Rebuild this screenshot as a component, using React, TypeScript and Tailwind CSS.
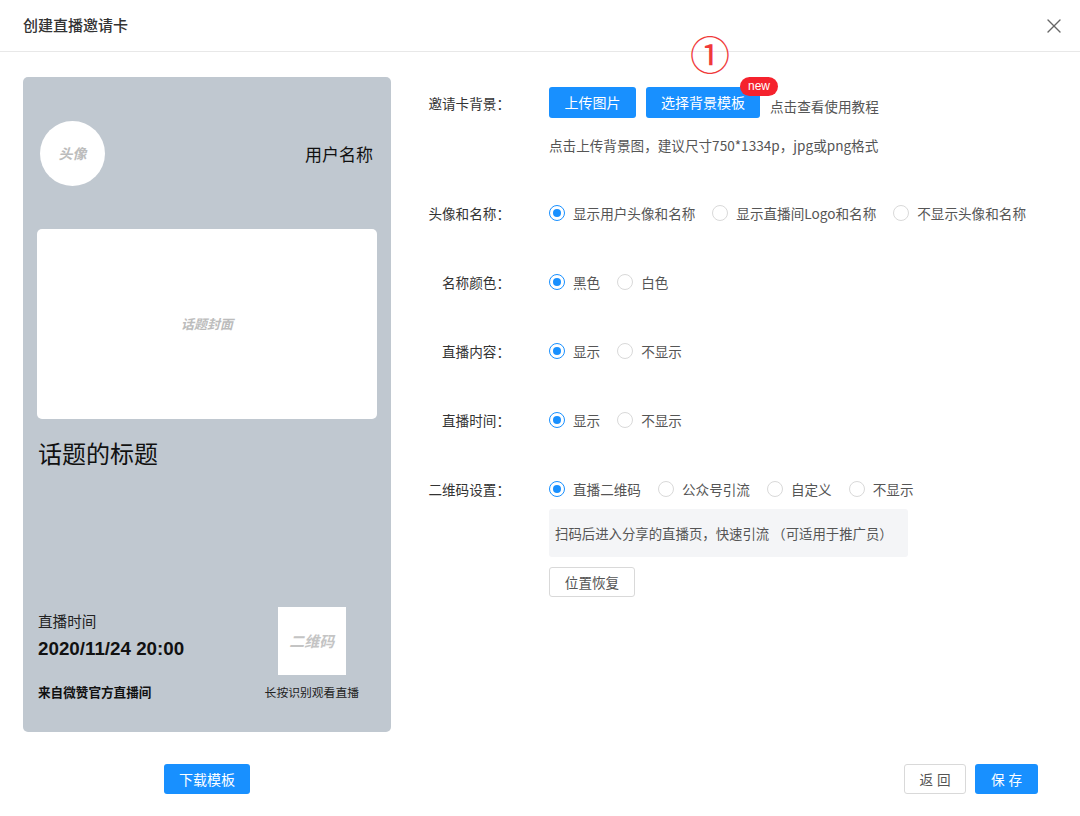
import React from "react";

const FONT = { fontFamily: '"Noto Sans CJK SC", "Liberation Sans", sans-serif' };

function Radio({ checked, label }: { checked?: boolean; label: string }) {
  return (
    <div className="flex items-center">
      <span
        className={
          checked
            ? "w-[16px] h-[16px] rounded-full border border-[#1890ff] flex items-center justify-center bg-white"
            : "w-[16px] h-[16px] rounded-full border border-[#d9d9d9] bg-white"
        }
      >
        {checked && <span className="w-[8px] h-[8px] rounded-full bg-[#1890ff]" />}
      </span>
      <span className="ml-[8px] text-[13.6px] text-[#555] leading-[20px]">{label}</span>
    </div>
  );
}

function Row({ label, children, className }: { label: string; children: React.ReactNode; className?: string }) {
  return (
    <div className={"flex items-center " + (className ?? "")}>
      <div className="w-[90px] text-right text-[13.6px] text-[#333] leading-[20px]">{label}</div>
      <div className="ml-[39px] flex items-center gap-[17px]">{children}</div>
    </div>
  );
}

export default function App() {
  return (
    <div className="w-[1080px] h-[816px] bg-white relative overflow-hidden" style={FONT}>
      {/* header */}
      <div className="h-[52px] border-b border-[#e8e8e8] flex items-center justify-between pl-[23px] pr-[14px]">
        <span className="text-[15px] font-medium text-[#333]">创建直播邀请卡</span>
        <svg width="24" height="24" viewBox="0 0 24 24" fill="none" stroke="#666" strokeWidth="1.4" strokeLinecap="round">
          <path d="M18 6 6 18" />
          <path d="m6 6 12 12" />
        </svg>
      </div>

      {/* body */}
      <div className="flex pt-[25px]">
        {/* card */}
        <div className="ml-[23px] w-[368px] h-[655px] rounded-[5px] bg-[#c0c8d0] flex flex-col px-[14px]">
          <div className="flex items-center justify-between mt-[44px] pl-[3px] pr-[4px]">
            <div className="w-[65px] h-[65px] rounded-full bg-white flex items-center justify-center">
              <span className="text-[14px] font-bold italic text-[#bcbcbc]">头像</span>
            </div>
            <span className="text-[17px] text-[#111]">用户名称</span>
          </div>
          <div className="mt-[43px] h-[190px] rounded-[5px] bg-white flex items-center justify-center">
            <span className="text-[13px] font-bold italic text-[#bcbcbc]">话题封面</span>
          </div>
          <div className="mt-[18px] pl-[1px] text-[24px] leading-[32px] text-[#111]">话题的标题</div>
          <div className="flex-1" />
          <div className="flex justify-between items-end pb-[31px] pl-[1px]">
            <div className="flex flex-col">
              <span className="text-[14.6px] leading-[20px] text-[#222]">直播时间</span>
              <span
                className="mt-[6px] text-[18.8px] leading-[24px] font-semibold text-[#111]"
                style={{ fontFamily: '"Liberation Sans", "Noto Sans CJK SC", sans-serif' }}
              >
                2020/11/24 20:00
              </span>
              <span className="mt-[22px] text-[12.6px] leading-[18px] font-semibold text-[#111]">来自微赞官方直播间</span>
            </div>
            <div className="flex flex-col items-center mr-[18px]">
              <div className="w-[68px] h-[68px] bg-white flex items-center justify-center">
                <span className="text-[15px] font-bold italic text-[#c4c4c4]">二维码</span>
              </div>
              <span className="mt-[8px] text-[11.8px] leading-[18px] text-[#222]">长按识别观看直播</span>
            </div>
          </div>
        </div>

        {/* settings */}
        <div className="ml-[29px] flex flex-col pt-[10px]">
          <Row label="邀请卡背景：">
            <div className="flex items-center">
              <button className="w-[87px] h-[31px] rounded-[3px] bg-[#1890ff] text-white text-[14px]">上传图片</button>
              <div className="relative ml-[10px]">
                <button className="w-[114px] h-[31px] rounded-[3px] bg-[#1890ff] text-white text-[14px]">选择背景模板</button>
                <span className="absolute right-[-18px] top-[-10px] h-[19px] w-[38px] rounded-full bg-[#f5222d] text-white text-[12px] leading-[19px] text-center" style={{ fontFamily: '"Liberation Sans", sans-serif' }}>
                  new
                </span>
              </div>
              <span className="ml-[10px] mt-[8px] text-[13.6px] text-[#555]">点击查看使用教程</span>
            </div>
          </Row>
          <div className="ml-[129px] mt-[17px] text-[13.6px] leading-[20px] text-[#555]">点击上传背景图，建议尺寸750*1334p，jpg或png格式</div>

          <Row label="头像和名称：" className="mt-[48px]">
            <Radio checked label="显示用户头像和名称" />
            <Radio label="显示直播间Logo和名称" />
            <Radio label="不显示头像和名称" />
          </Row>
          <Row label="名称颜色：" className="mt-[49px]">
            <Radio checked label="黑色" />
            <Radio label="白色" />
          </Row>
          <Row label="直播内容：" className="mt-[49px]">
            <Radio checked label="显示" />
            <Radio label="不显示" />
          </Row>
          <Row label="直播时间：" className="mt-[49px]">
            <Radio checked label="显示" />
            <Radio label="不显示" />
          </Row>
          <Row label="二维码设置：" className="mt-[49px]">
            <Radio checked label="直播二维码" />
            <Radio label="公众号引流" />
            <Radio label="自定义" />
            <Radio label="不显示" />
          </Row>
          <div className="ml-[129px] mt-[10px] w-[359px] h-[48px] rounded-[3px] bg-[#f4f5f7] flex items-center px-[6px] text-[13.4px] text-[#555]">
            扫码后进入分享的直播页，快速引流 （可适用于推广员）
          </div>
          <div className="ml-[129px] mt-[10px]">
            <button className="w-[86px] h-[30px] rounded-[3px] border border-[#d9d9d9] bg-white text-[13.6px] text-[#555]">位置恢复</button>
          </div>
        </div>
      </div>

      {/* footer */}
      <div className="flex items-center mt-[32px]">
        <div className="ml-[23px] w-[368px] flex justify-center">
          <button className="w-[86px] h-[30px] rounded-[3px] bg-[#1890ff] text-white text-[14px]">下载模板</button>
        </div>
        <div className="flex-1 flex justify-end pr-[42px] gap-[9px]">
          <button className="w-[62px] h-[30px] rounded-[3px] border border-[#d9d9d9] bg-white text-[13.6px] text-[#555] tracking-[4px] pl-[4px]">返回</button>
          <button className="w-[63px] h-[30px] rounded-[3px] bg-[#1890ff] text-white text-[13.6px] tracking-[4px] pl-[4px]">保存</button>
        </div>
      </div>

      {/* annotation */}
      <span className="absolute left-[690px] top-[33px] text-[40px] leading-none text-[#f03a3a]">①</span>
    </div>
  );
}
